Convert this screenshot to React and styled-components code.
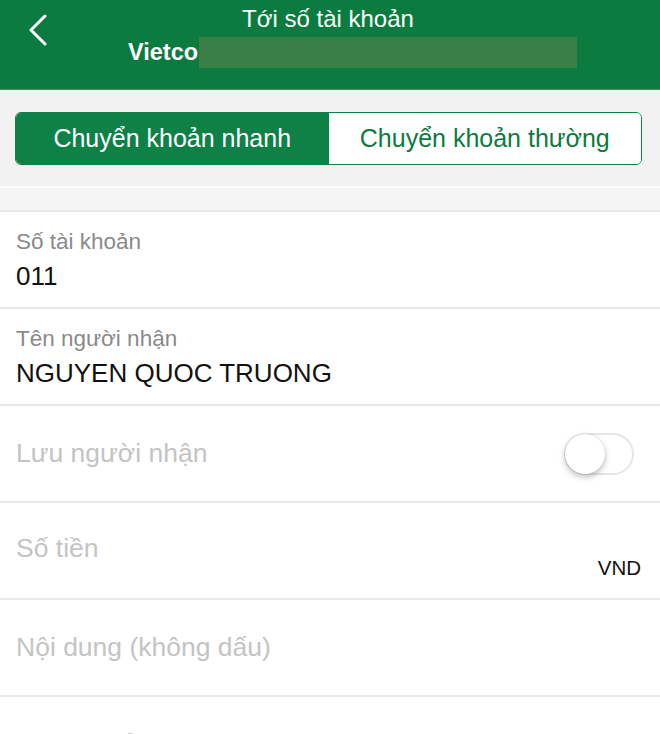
import React, { useState } from "react";
import styled, { createGlobalStyle } from "styled-components";

const Global = createGlobalStyle`
  html, body {
    margin: 0;
    padding: 0;
    background: #fff;
    font-family: "Liberation Sans", Arial, sans-serif;
  }
  * { box-sizing: border-box; }
`;

const App = () => {
  const [tab, setTab] = useState(0);
  const [save, setSave] = useState(false);

  return (
    <Page>
      <Global />
      <Header>
        <Back aria-label="back">
          <svg width="22" height="32" viewBox="0 0 22 32">
            <path
              d="M18 2 L4 16 L18 30"
              fill="none"
              stroke="#fff"
              strokeWidth="3"
              strokeLinecap="round"
              strokeLinejoin="round"
            />
          </svg>
        </Back>
        <Title>Tới số tài khoản</Title>
        <Sub>
          <span>Vietco</span>
          <Mask />
        </Sub>
      </Header>

      <TabsBar>
        <Segment>
          <SegButton $active={tab === 0} onClick={() => setTab(0)}>
            Chuyển khoản nhanh
          </SegButton>
          <SegButton $active={tab === 1} onClick={() => setTab(1)}>
            Chuyển khoản thường
          </SegButton>
        </Segment>
      </TabsBar>
      <Spacer />

      <Form>
        <Row>
          <Label>Số tài khoản</Label>
          <Value>011</Value>
        </Row>
        <Row>
          <Label>Tên người nhận</Label>
          <Value>NGUYEN QUOC TRUONG</Value>
        </Row>
        <Row $center>
          <Placeholder>Lưu người nhận</Placeholder>
          <Toggle $on={save} onClick={() => setSave(!save)}>
            <Knob $on={save} />
          </Toggle>
        </Row>
        <Row $center>
          <Placeholder $up>Số tiền</Placeholder>
          <Unit>VND</Unit>
        </Row>
        <Row $center>
          <Placeholder>Nội dung (không dấu)</Placeholder>
        </Row>
        <Row $center>
          <Placeholder $down>Phí chuyển tiền</Placeholder>
        </Row>
      </Form>
    </Page>
  );
};

export default App;

const Page = styled.div`
  width: 660px;
  height: 734px;
  overflow: hidden;
  background: #fff;
`;

const Header = styled.div`
  position: relative;
  height: 90px;
  background: #0b7b40;
  border-bottom: 1px solid #2e9a5c;
  color: #fff;
  padding-top: 5px;
`;

const Back = styled.div`
  position: absolute;
  left: 27px;
  top: 14px;
`;

const Title = styled.div`
  text-align: center;
  font-size: 24px;
  line-height: 28px;
  padding-right: 4px;
`;

const Sub = styled.div`
  display: flex;
  align-items: center;
  padding-left: 128px;
  margin-top: 3px;
  font-size: 23.5px;
  font-weight: 700;
  height: 32px;
`;

const Mask = styled.div`
  width: 378px;
  height: 31px;
  margin-left: 1px;
  background: #3a7f45;
`;

const TabsBar = styled.div`
  background: #f2f2f2;
  padding: 22px 18px 21px 15px;
`;

const Segment = styled.div`
  display: flex;
  height: 53px;
  border: 1.5px solid #0d8146;
  border-radius: 6px;
  overflow: hidden;
  background: #fff;
`;

const SegButton = styled.button`
  flex: 1;
  border: none;
  margin: 0;
  padding: 0;
  font-family: inherit;
  font-size: 25px;
  cursor: pointer;
  background: ${(p) => (p.$active ? "#0d8146" : "#fff")};
  color: ${(p) => (p.$active ? "#fff" : "#0d7a42")};
`;

const Spacer = styled.div`
  height: 24px;
  border-top: 2px solid #fff;
  background: #f5f5f5;
`;

const Form = styled.div`
  border-top: 2px solid #e9e9e9;
`;

const Row = styled.div`
  height: 97px;
  padding: 0 19px 0 16px;
  border-bottom: 2px solid #e9e9e9;
  display: flex;
  flex-direction: ${(p) => (p.$center ? "row" : "column")};
  align-items: ${(p) => (p.$center ? "center" : "flex-start")};
  justify-content: ${(p) => (p.$center ? "space-between" : "center")};
`;

const Label = styled.div`
  font-size: 22.5px;
  color: #8a8a8a;
  line-height: 26px;
`;

const Value = styled.div`
  font-size: 26px;
  color: #111;
  line-height: 30px;
  margin-top: 6px;
`;

const Placeholder = styled.div`
  font-size: 26.5px;
  color: #c4c4c4;
  margin-top: ${(p) => (p.$up ? "-4px" : p.$down ? "2px" : "0")};
`;

const Unit = styled.div`
  font-size: 20.5px;
  color: #111;
  align-self: flex-end;
  margin-bottom: 18px;
`;

const Toggle = styled.div`
  width: 70px;
  height: 42px;
  border-radius: 21px;
  border: 2px solid #e6e6e6;
  background: ${(p) => (p.$on ? "#4cd964" : "#fff")};
  position: relative;
  cursor: pointer;
  margin-right: 7px;
`;

const Knob = styled.div`
  position: absolute;
  top: -1px;
  left: ${(p) => (p.$on ? "29px" : "-1px")};
  width: 40px;
  height: 40px;
  border-radius: 50%;
  background: #fff;
  box-shadow: 0 3px 6px rgba(0, 0, 0, 0.25), 0 0 1px rgba(0, 0, 0, 0.2);
`;
